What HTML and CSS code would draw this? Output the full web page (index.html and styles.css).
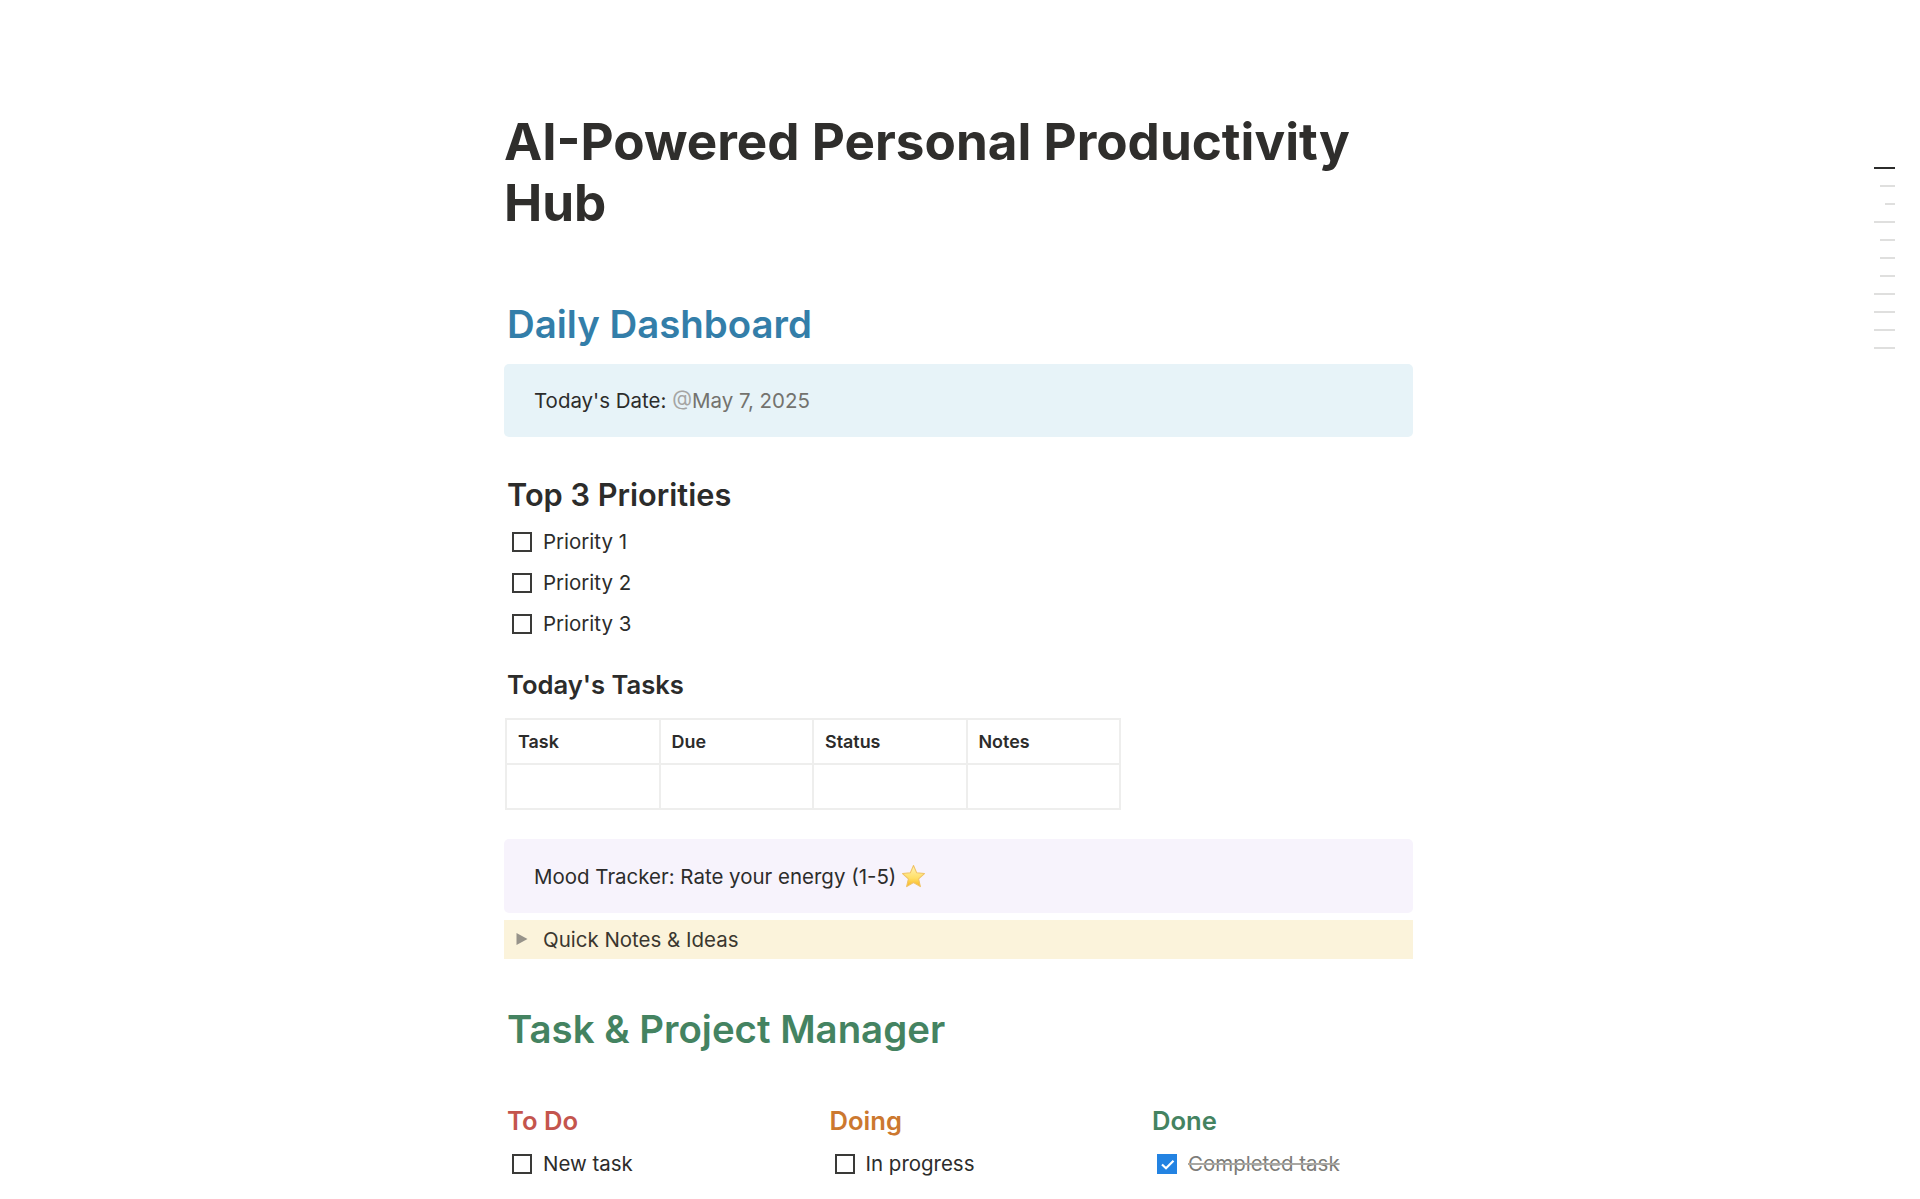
FILE: index.html
```html
<!DOCTYPE html>
<html lang="en">
<head>
<meta charset="utf-8">
<title>AI-Powered Personal Productivity Hub</title>
<link rel="stylesheet" href="styles.css">
</head>
<body>
<main class="page">
  <h1 class="title">AI-Powered Personal Productivity Hub</h1>
  <h2 class="h-one blue">Daily Dashboard</h2>
  <div class="callout callout-blue">Today's Date: <span class="mention"><span class="at">@</span>May 7, 2025</span></div>
  <h3 class="h-two">Top 3 Priorities</h3>
  <ul class="todos">
    <li class="todo"><span class="box"></span><span>Priority 1</span></li>
    <li class="todo"><span class="box"></span><span>Priority 2</span></li>
    <li class="todo"><span class="box"></span><span>Priority 3</span></li>
  </ul>
  <h4 class="h-three">Today's Tasks</h4>
  <table class="tasks">
    <tr><th>Task</th><th>Due</th><th>Status</th><th>Notes</th></tr>
    <tr><td></td><td></td><td></td><td></td></tr>
  </table>
  <div class="callout callout-purple">Mood Tracker: Rate your energy (1-5) <svg class="star" viewBox="0 0 24 24" aria-hidden="true"><defs><linearGradient id="sg" x1="0" y1="0" x2="0" y2="1"><stop offset="0" stop-color="#fff3b8"/><stop offset="0.6" stop-color="#ffdf66"/><stop offset="1" stop-color="#f9b51e"/></linearGradient></defs><path d="M12 1.500l3.100 7 7.400.7-5.600 5 1.700 7.500L12 17.800l-6.600 3.900L7.100 14.200l-5.600-5 7.400-.7z" fill="url(#sg)" stroke="#f0c264" stroke-width="1" stroke-linejoin="round"/></svg></div>
  <div class="toggle"><svg class="arrow" viewBox="0 0 12 12" aria-hidden="true"><path d="M0.500 0L11.500 6 0.500 12z" fill="#97938a"/></svg><span>Quick Notes &amp; Ideas</span></div>
  <h2 class="h-one green">Task &amp; Project Manager</h2>
  <div class="board">
    <section class="col">
      <h4 class="h-three red">To Do</h4>
      <div class="todo"><span class="box"></span><span>New task</span></div>
    </section>
    <section class="col">
      <h4 class="h-three orange">Doing</h4>
      <div class="todo"><span class="box"></span><span>In progress</span></div>
    </section>
    <section class="col">
      <h4 class="h-three green">Done</h4>
      <div class="todo done"><span class="box checked"><svg viewBox="0 0 20 20" aria-hidden="true"><path d="M5 10.500l4 3.700 7.500-7.500" fill="none" stroke="#fff" stroke-width="2.200"/></svg></span><span class="struck">Completed task</span></div>
    </section>
  </div>
</main>
<nav class="toc" aria-hidden="true">
  <i class="active w20"></i><i class="w14"></i><i class="w10"></i><i class="w20"></i><i class="w14"></i><i class="w14"></i><i class="w14"></i><i class="w20"></i><i class="w20"></i><i class="w20"></i><i class="w20"></i>
</nav>
</body>
</html>
```
FILE: styles.css
```css
* { box-sizing: border-box; }
html, body { margin: 0; height: 1199px; overflow: hidden; background: #fff; }
body {
  font-family: Inter, "Noto Sans", sans-serif;
  font-size: 20.480px;
  color: #2c2c2b;
  position: relative;
}
.page { width: 909px; margin-left: 504px; padding-top: 111px; }
.title { margin: 0; font-size: 51.200px; line-height: 61px; font-weight: 700; color: #2f2e2c; }
.h-one { margin: 0; padding-left: 3px; font-size: 38.400px; line-height: 48px; font-weight: 600; }
.h-one.blue { margin-top: 67px; color: #337ea9; }
.h-one.green { margin-top: 46px; color: #448361; }
.callout { padding: 0 30px; border-radius: 5px; display: flex; align-items: center; white-space: pre-wrap; }
.callout-blue { margin-top: 16px; height: 73px; background: #e7f3f8; }
.callout-purple { height: 74px; background: #f7f3fc; }
.mention { color: #73726e; }
.at { color: #a5a5a3; }
.h-two { margin: 38px 0 0; padding-left: 3px; font-size: 30.720px; line-height: 40px; font-weight: 600; }
.h-three { margin: 0; padding-left: 3px; font-size: 25.600px; line-height: 34px; font-weight: 600; }
.todos { list-style: none; margin: 6px 0 0; padding: 0; }
.todo { display: flex; align-items: center; height: 41px; padding-left: 8px; gap: 11px; }
.box { width: 20px; height: 20px; border: 2px solid #3a3a38; flex: none; display: block; }
.box.checked { border: 0; background: #2383e2; }
.box.checked svg { display: block; width: 20px; height: 20px; }
.struck { color: #7d7c78; text-decoration: line-through; text-decoration-color: #a9a8a4; }
.todos + .h-three { margin-top: 24px; }
.tasks { margin: 16px 0 0 1px; border-collapse: collapse; table-layout: fixed; width: 616px; }
.tasks th, .tasks td { border: 2px solid #eeeeed; height: 45px; padding: 0 11px; text-align: left; font-size: 17.920px; font-weight: 600; }
.tasks + .callout { margin-top: 29px; }
.star { width: 25px; height: 25px; margin-left: -1px; }
.toggle { margin-top: 7px; height: 39px; background: #fbf3db; display: flex; align-items: center; padding-left: 12px; gap: 15px; color: #3a372f; }
.arrow { width: 12px; height: 12px; margin-top: -2px; flex: none; }
.board { display: grid; grid-template-columns: 322.500px 322.500px 1fr; margin-top: 49px; }
.board .h-three { line-height: 38px; }
.board .todo { margin-top: 3px; }
.red { color: #c4554d; }
.orange { color: #cc782f; }
.green { color: #448361; }
.toc { position: absolute; top: 167px; right: 25px; display: flex; flex-direction: column; align-items: flex-end; gap: 16px; }
.toc i { display: block; height: 2px; background: #dfdfde; }
.toc i.active { background: #2c2c2b; }
.w20 { width: 21px; }
.w14 { width: 15px; }
.w10 { width: 10px; }
```
